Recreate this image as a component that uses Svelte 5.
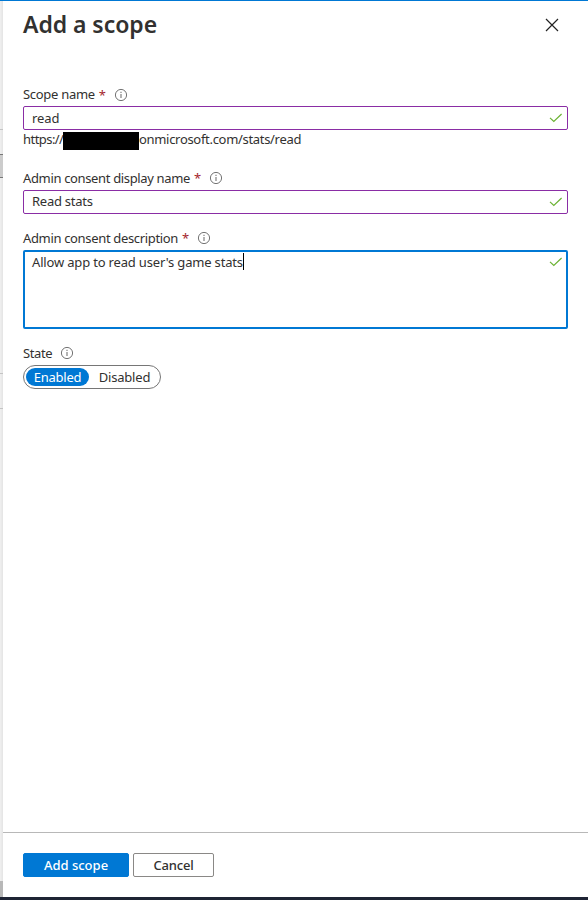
<script>
  let scopeName = 'read';
  let displayName = 'Read stats';
  let description = "Allow app to read user's game stats";
</script>

{#snippet info()}
  <svg class="info" width="14" height="14" viewBox="0 0 14 14" fill="none">
    <circle cx="7" cy="7" r="5.6" stroke="#747474" />
    <path d="M7 6v4" stroke="#747474" stroke-width="1.1" />
    <path d="M7 3.8v1.2" stroke="#747474" stroke-width="1.1" />
  </svg>
{/snippet}

{#snippet check()}
  <svg class="check" width="13" height="10" viewBox="0 0 13 10" fill="none">
    <path d="M1 4.9 4.8 8.4 12.6 1" stroke="#6bb233" stroke-width="1.2" />
  </svg>
{/snippet}

<div class="screen">
  <aside>
    <i style:height="128px"></i>
    <i class="line" style:height="25px"></i>
    <i class="tab" style:height="24px"></i>
    <i class="light" style:height="195px"></i>
    <i class="line" style:height="35px"></i>
    <i class="line" style:height="473px"></i>
    <i class="thumb" style:height="16px"></i>
  </aside>
  <main>
    <header>
      <h1>Add a scope</h1>
      <svg class="close" width="14" height="14" viewBox="0 0 14 14" fill="none">
        <path d="M1 1l12 12M13 1 1 13" stroke="#222" stroke-width="1.2" />
      </svg>
    </header>
    <section class="form">
      <div class="label"><span class="l1">Scope name</span><b>*</b>{@render info()}</div>
      <div class="input"><span class="v1">{scopeName}</span>{@render check()}</div>
      <div class="url"><span class="u1">https://</span><i class="redact"></i><span class="u2">onmicrosoft.com/stats/read</span></div>
      <div class="label second"><span class="l2">Admin consent display name</span><b>*</b>{@render info()}</div>
      <div class="input"><span class="v2">{displayName}</span>{@render check()}</div>
      <div class="label third"><span class="l3">Admin consent description</span><b>*</b>{@render info()}</div>
      <div class="input area"><span class="v3">{description}</span><i class="caret"></i>{@render check()}</div>
      <div class="label fourth"><span class="l4">State</span>{@render info()}</div>
      <div class="toggle"><span class="on">Enabled</span><span class="off">Disabled</span></div>
    </section>
    <footer>
      <button class="primary">Add scope</button>
      <button class="cancel">Cancel</button>
    </footer>
  </main>
  <div class="taskbar"></div>
</div>

<style>
  .screen {
    width: 588px;
    height: 900px;
    box-sizing: border-box;
    border-top: 1px solid #0078d4;
    display: grid;
    grid-template: 896px 3px / 3px 585px;
    background: #fff;
    color: #323130;
    font: 13px/18px "Noto Sans", "Open Sans", sans-serif;
    overflow: hidden;
  }
  i { display: block; box-sizing: border-box; }
  aside { background: linear-gradient(90deg, #f0f0f0, #e4e4e4); }
  .line { border-top: 1px solid #c4c4c4; }
  .tab { background: #ccc; border: solid #777; border-width: 1px 0; }
  .thumb { background: #b8b8b8; }
  main { display: flex; flex-direction: column; background: #fff; }
  header { height: 84px; padding: 0 29px 0 20px; display: flex; justify-content: space-between; }
  h1 { margin: 7px 0 0; font-size: 23px; line-height: 33px; font-weight: 600; height: 34px; letter-spacing: -.05px; white-space: nowrap; }
  .close { margin-top: 17px; }
  .form { flex: 1; padding: 0 20px; }
  .label { height: 20px; margin-bottom: 1px; display: flex; align-items: center; white-space: nowrap; }
  .label b { color: #a4262c; font-weight: 400; margin-left: 4px; width: 7px; font-size: 13px; }
  .l1 { letter-spacing: -.3px; margin-top: -2px; }
  .l2 { letter-spacing: -.35px; }
  .l3 { letter-spacing: -.34px; }
  .l4 { letter-spacing: -.4px; }
  .info { margin-left: 8px; }
  .input { height: 24px; box-sizing: border-box; border: 1px solid #8a2da5; border-radius: 2px; padding: 0 5px 0 8px; display: flex; align-items: center; }
  .input span { white-space: pre; }
  .v1 { letter-spacing: -.1px; }
  .v2 { letter-spacing: -.25px; margin-top: -2px; }
  .v3 { letter-spacing: -.17px; }
  .check { margin-left: auto; }
  .url { height: 19px; display: flex; align-items: center; white-space: nowrap; }
  .redact { width: 76px; height: 18px; background: #000; margin-top: 3px; }
  .u1 { width: 40px; letter-spacing: -.55px; margin-top: -1px; }
  .u2 { letter-spacing: -.31px; margin-top: -1px; }
  .second { margin-top: 18px; height: 21px; margin-bottom: 2px; }
  .third { margin-top: 13px; height: 22px; }
  .third .info { margin-left: 7.5px; }
  .area { height: 79px; border: 2px solid #0078d4; align-items: flex-start; padding: 1px 4px 0 7px; }
  .area .check { margin-top: 4px; }
  .caret { width: 1px; height: 17px; background: #000; margin-top: 0; }
  .fourth { margin-top: 13px; height: 22px; }
  .toggle { width: 138px; height: 24px; box-sizing: border-box; border: 1px solid #767676; border-radius: 12px; display: flex; align-items: center; padding-left: 2px; }
  .on { width: 63px; height: 18px; border-radius: 9px; background: #0078d4; color: #fff; text-align: center; letter-spacing: -.25px; }
  .off { width: 71px; text-align: center; letter-spacing: -.2px; }
  footer { height: 65px; box-sizing: border-box; border-top: 1px solid #b8b8b8; padding: 20px; display: flex; gap: 4px; }
  button { height: 24px; box-sizing: border-box; border: 1px solid #8a8886; border-radius: 2px; padding: 0; font: inherit; line-height: 22px; color: #323130; background: #fff; }
  .primary { width: 106px; background: #0078d4; border-color: #0078d4; color: #fff; font-weight: 500; }
  .cancel { width: 81px; font-weight: 500; letter-spacing: -.2px; }
  .taskbar { grid-column: 1 / -1; background: #1e2434; }
</style>
